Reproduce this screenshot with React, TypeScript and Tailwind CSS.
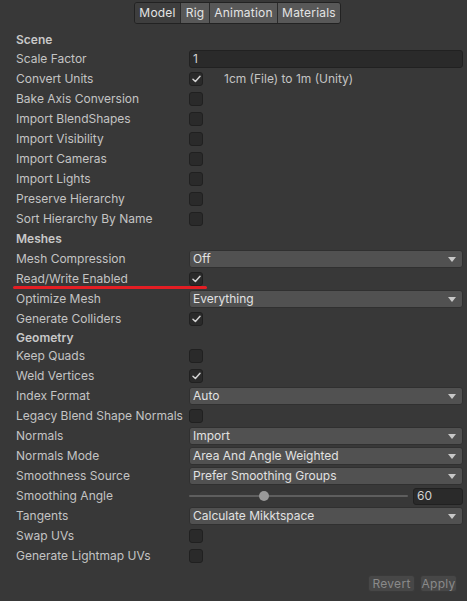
import React from 'react';

type Row =
  | { kind: 'header'; label: string; h?: string }
  | { kind: 'check'; label: string; checked?: boolean; note?: string; mark?: boolean }
  | { kind: 'select'; label: string; value: string }
  | { kind: 'text'; label: string; value: string }
  | { kind: 'slider'; label: string; value: string; pos: number };

const rows: Row[] = [
  { kind: 'header', label: 'Scene', h: 'h-[18px]' },
  { kind: 'text', label: 'Scale Factor', value: '1' },
  { kind: 'check', label: 'Convert Units', checked: true, note: '1cm (File) to 1m (Unity)' },
  { kind: 'check', label: 'Bake Axis Conversion' },
  { kind: 'check', label: 'Import BlendShapes' },
  { kind: 'check', label: 'Import Visibility' },
  { kind: 'check', label: 'Import Cameras' },
  { kind: 'check', label: 'Import Lights' },
  { kind: 'check', label: 'Preserve Hierarchy' },
  { kind: 'check', label: 'Sort Hierarchy By Name' },
  { kind: 'header', label: 'Meshes' },
  { kind: 'select', label: 'Mesh Compression', value: 'Off' },
  { kind: 'check', label: 'Read/Write Enabled', checked: true, mark: true },
  { kind: 'select', label: 'Optimize Mesh', value: 'Everything' },
  { kind: 'check', label: 'Generate Colliders', checked: true },
  { kind: 'header', label: 'Geometry', h: 'h-[17px]' },
  { kind: 'check', label: 'Keep Quads' },
  { kind: 'check', label: 'Weld Vertices', checked: true },
  { kind: 'select', label: 'Index Format', value: 'Auto' },
  { kind: 'check', label: 'Legacy Blend Shape Normals' },
  { kind: 'select', label: 'Normals', value: 'Import' },
  { kind: 'select', label: 'Normals Mode', value: 'Area And Angle Weighted' },
  { kind: 'select', label: 'Smoothness Source', value: 'Prefer Smoothing Groups' },
  { kind: 'slider', label: 'Smoothing Angle', value: '60', pos: 75 },
  { kind: 'select', label: 'Tangents', value: 'Calculate Mikktspace' },
  { kind: 'check', label: 'Swap UVs' },
  { kind: 'check', label: 'Generate Lightmap UVs' },
];

const tabs = [
  { name: 'Model', w: 'w-[45px]', active: true },
  { name: 'Rig', w: 'w-[29px]' },
  { name: 'Animation', w: 'w-[68px]' },
  { name: 'Materials', w: 'w-[63px]' },
];

function Checkbox({ checked }: { checked?: boolean }) {
  return (
    <div className="w-[14px] h-[14px] rounded-[3px] bg-[#2a2a2a] border border-[#202020] flex items-center justify-center">
      {checked && (
        <svg width="9" height="8" viewBox="0 0 9 8" fill="none">
          <path d="M1 4.2 L3.4 6.5 L8 1.2" stroke="#d2d2d2" strokeWidth="1.5" strokeLinecap="round" strokeLinejoin="round" />
        </svg>
      )}
    </div>
  );
}

function Select({ value }: { value: string }) {
  return (
    <div className="flex-1 h-[18px] rounded-[3px] bg-[#515151] border border-[#303030] flex items-center justify-between pl-[3px] pr-[6px] text-[#e2e2e2]">
      <span>{value}</span>
      <svg width="8" height="5" viewBox="0 0 8 5">
        <path d="M0 0 H8 L4 5 Z" fill="#c8c8c8" />
      </svg>
    </div>
  );
}

function Control({ row }: { row: Row }) {
  switch (row.kind) {
    case 'check':
      return (
        <div className="flex items-center">
          <Checkbox checked={row.checked} />
          {row.note && <span className="ml-[21px] text-[#c4c4c4]">{row.note}</span>}
        </div>
      );
    case 'select':
      return <Select value={row.value} />;
    case 'text':
      return (
        <div className="flex-1 h-[18px] rounded-[3px] bg-[#2a2a2a] border border-[#212121] flex items-center pl-[3px] text-[#d2d2d2]">
          {row.value}
        </div>
      );
    case 'slider':
      return (
        <div className="flex-1 flex items-center gap-[5px]">
          <div className="relative flex-1 h-[10px] flex items-center">
            <div className="w-full h-[2px] bg-[#5e5e5e] rounded-full" />
            <div
              className="absolute top-0 w-[10px] h-[10px] rounded-full bg-[#999999]"
              style={{ left: `calc(${row.pos}px - 5px)` }}
            />
          </div>
          <div className="w-[50px] h-[17px] rounded-[3px] bg-[#2a2a2a] border border-[#212121] flex items-center pl-[3px] text-[#d2d2d2]">
            {row.value}
          </div>
        </div>
      );
    default:
      return null;
  }
}

export default function App() {
  return (
    <div className="w-[467px] h-[601px] bg-[#383838] text-[12px] leading-none font-['Inter','Noto_Sans',sans-serif] text-[#c4c4c4] flex flex-col pt-[2px] overflow-hidden">
      {/* Tabs */}
      <div className="flex pl-[134px]">
        <div className="flex h-[22px] rounded-[3px] border border-[#222222] overflow-hidden">
          {tabs.map((t, i) => (
            <div
              key={t.name}
              className={`${t.w} flex items-center justify-center text-[#e4e4e4] tracking-[0.2px] ${
                t.active ? 'bg-[#3e3e3e]' : 'bg-[#585858]'
              } ${i > 0 ? 'border-l border-[#2b2b2b]' : ''}`}
            >
              {t.name}
            </div>
          ))}
        </div>
      </div>

      {/* Properties */}
      <div className="mt-[7px] pl-[16px] pr-[4px] flex flex-col">
        {rows.map((row) =>
          row.kind === 'header' ? (
            <div key={row.label} className={`${row.h ?? 'h-[20px]'} flex items-center font-semibold text-[#c8c8c8]`}>
              {row.label}
            </div>
          ) : (
            <div key={row.label} className="relative h-[20px] flex items-center">
              <div className="w-[173px] shrink-0 whitespace-nowrap">{row.label}</div>
              <div className="flex-1 flex items-center">
                <Control row={row} />
              </div>
              {row.kind === 'check' && row.mark && (
                <div className="absolute left-[-3px] top-[17px] w-[194px] h-[3px] rounded-full bg-[#e31e24]" />
              )}
            </div>
          )
        )}
      </div>

      {/* Footer */}
      <div className="mt-[9px] flex justify-end gap-[5px] pr-[10px]">
        <div className="w-[47px] h-[17px] rounded-[3px] bg-[#474747] border border-[#3a3a3a] flex items-center justify-center text-[#8a8a8a] tracking-[0.3px]">
          Revert
        </div>
        <div className="w-[37px] h-[17px] rounded-[3px] bg-[#474747] border border-[#3a3a3a] flex items-center justify-center text-[#8a8a8a] tracking-[0.3px]">
          Apply
        </div>
      </div>
    </div>
  );
}
